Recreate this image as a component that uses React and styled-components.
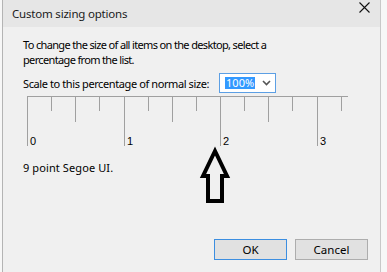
import styled, { createGlobalStyle } from 'styled-components';

const GlobalStyle = createGlobalStyle`
  html, body {
    margin: 0;
    padding: 0;
    background: #f7f7f7;
  }
  body {
    font-family: 'Noto Sans', 'Open Sans', sans-serif;
    font-size: 11px;
    letter-spacing: -0.4px;
    color: #000;
  }
`;

const Window = styled.div`
  position: relative;
  margin-left: 2px;
  width: 379px;
  height: 272px;
  border-left: 1px solid #b4b4b4;
  border-right: 1px solid #c8c8c8;
  background: #f0f0f0;
  box-sizing: border-box;
`;

const TitleBar = styled.div`
  height: 27px;
  display: flex;
  align-items: flex-start;
  justify-content: space-between;
  background: #e6e6e6;
  padding-left: 9px;
`;

const Title = styled.div`
  margin-top: 6px;
  font-size: 11.5px;
  letter-spacing: -0.2px;
  color: #1a1a1a;
`;

const CloseBtn = styled.div`
  width: 30px;
  height: 14px;
  display: flex;
  align-items: center;
  justify-content: center;
  margin-right: 1px;
`;

const Content = styled.div`
  padding: 10px 20px 0 20px;
`;

const Intro = styled.p`
  margin: 0;
  line-height: 15px;
  white-space: nowrap;
  letter-spacing: -0.65px;
`;

const ScaleRow = styled.div`
  display: flex;
  align-items: center;
  margin-top: 6px;
  gap: 10px;
`;

const Select = styled.div`
  width: 57px;
  height: 20px;
  box-sizing: border-box;
  border: 1px solid #5c9fe4;
  background: #fff;
  display: flex;
  align-items: center;
  justify-content: space-between;
  padding: 0 4px 0 5px;
`;

const Selected = styled.span`
  background: #3399ff;
  color: #fff;
  line-height: 12px;
  padding: 0 1px;
  letter-spacing: 0;
`;

const RulerWrap = styled.div`
  margin-top: 3px;
  margin-left: 4px;
  height: 52px;
`;

const Caption = styled.div`
  margin-top: 12px;
  letter-spacing: 0.1px;
`;

const Arrow = styled.svg`
  position: absolute;
  left: 193px;
  top: 145px;
`;

const Footer = styled.div`
  position: absolute;
  left: 0;
  right: 0;
  top: 239px;
  display: flex;
  justify-content: flex-end;
  gap: 8px;
  padding-right: 12px;
`;

const Button = styled.button`
  width: 73px;
  height: 21px;
  box-sizing: border-box;
  font-family: 'Noto Sans', 'Open Sans', sans-serif;
  font-size: 11.5px;
  background: #e1e1e1;
  border: 1px solid ${p => (p.$primary ? '#3c8ee0' : '#adadad')};
  padding: 0;
  color: #000;
`;

const Ruler = () => {
  const step = 96.5;
  const ticks = [];
  for (let i = 0; i <= 13; i++) {
    const x = Math.round(i * (step / 4)) + 0.5;
    const len = i % 4 === 0 ? 50 : i % 2 === 0 ? 26 : 15;
    ticks.push(<line key={i} x1={x} y1={0} x2={x} y2={len} stroke="#a0a0a0" strokeWidth="1" />);
  }
  return (
    <svg width="322" height="52">
      <line x1="0" y1="0.5" x2="321" y2="0.5" stroke="#a0a0a0" strokeWidth="1" />
      {ticks}
      {[0, 1, 2, 3].map(n => (
        <text key={n} x={Math.round(n * step) + 3} y={49} fontFamily="'Liberation Sans', sans-serif" fontSize="11" fill="#000">
          {n}
        </text>
      ))}
    </svg>
  );
};

export default function App() {
  return (
    <>
      <GlobalStyle />
      <Window>
        <TitleBar>
          <Title>Custom sizing options</Title>
          <CloseBtn>
            <svg width="11" height="11" viewBox="0 0 11 11">
              <path d="M0.5 0.5 L10.5 10.5 M10.5 0.5 L0.5 10.5" stroke="#111" strokeWidth="1.1" />
            </svg>
          </CloseBtn>
        </TitleBar>
        <Content>
          <Intro>
            To change the size of all items on the desktop, select a
            <br />
            percentage from the list.
          </Intro>
          <ScaleRow>
            <span>Scale to this percentage of normal size:</span>
            <Select>
              <Selected>100%</Selected>
              <svg width="9" height="6" viewBox="0 0 9 6">
                <path d="M1 1 L4.5 4.5 L8 1" stroke="#555" strokeWidth="1.6" fill="none" />
              </svg>
            </Select>
          </ScaleRow>
          <RulerWrap>
            <Ruler />
          </RulerWrap>
          <Caption>9 point Segoe UI.</Caption>
        </Content>
        <Arrow width="40" height="62" viewBox="0 0 40 62">
          <path d="M19 6 L7 31 L12 31 L12 56 L26 56 L26 31 L31 31 Z" fill="none" stroke="#000" strokeWidth="4" strokeLinejoin="miter" />
        </Arrow>
        <Footer>
          <Button $primary>OK</Button>
          <Button>Cancel</Button>
        </Footer>
      </Window>
    </>
  );
}
